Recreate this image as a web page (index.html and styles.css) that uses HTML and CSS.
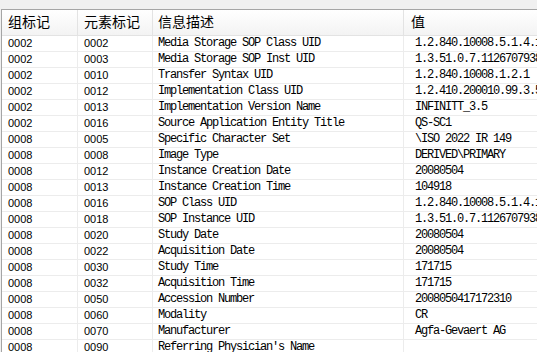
FILE: index.html
```html
<!DOCTYPE html>
<html lang="zh-CN">
<head>
<meta charset="utf-8">
<title>DICOM 标签</title>
<link rel="stylesheet" href="styles.css">
</head>
<body>
<div class="list">
  <div class="head">
    <div class="hcell">组标记</div>
    <div class="hcell">元素标记</div>
    <div class="hcell">信息描述</div>
    <div class="hcell">值</div>
  </div>
  <div class="body">
    <div class="row"><div class="c g">0002</div><div class="c e">0002</div><div class="c d">Media Storage SOP Class UID</div><div class="c v">1.2.840.10008.5.1.4.1.1.1</div></div>
    <div class="row"><div class="c g">0002</div><div class="c e">0003</div><div class="c d">Media Storage SOP Inst UID</div><div class="c v">1.3.51.0.7.1126707938</div></div>
    <div class="row"><div class="c g">0002</div><div class="c e">0010</div><div class="c d">Transfer Syntax UID</div><div class="c v">1.2.840.10008.1.2.1</div></div>
    <div class="row"><div class="c g">0002</div><div class="c e">0012</div><div class="c d">Implementation Class UID</div><div class="c v">1.2.410.200010.99.3.5</div></div>
    <div class="row"><div class="c g">0002</div><div class="c e">0013</div><div class="c d">Implementation Version Name</div><div class="c v">INFINITT_3.5</div></div>
    <div class="row"><div class="c g">0002</div><div class="c e">0016</div><div class="c d">Source Application Entity Title</div><div class="c v">QS-SC1</div></div>
    <div class="row"><div class="c g">0008</div><div class="c e">0005</div><div class="c d">Specific Character Set</div><div class="c v">\ISO 2022 IR 149</div></div>
    <div class="row"><div class="c g">0008</div><div class="c e">0008</div><div class="c d">Image Type</div><div class="c v">DERIVED\PRIMARY</div></div>
    <div class="row"><div class="c g">0008</div><div class="c e">0012</div><div class="c d">Instance Creation Date</div><div class="c v">20080504</div></div>
    <div class="row"><div class="c g">0008</div><div class="c e">0013</div><div class="c d">Instance Creation Time</div><div class="c v">104918</div></div>
    <div class="row"><div class="c g">0008</div><div class="c e">0016</div><div class="c d">SOP Class UID</div><div class="c v">1.2.840.10008.5.1.4.1.1.1</div></div>
    <div class="row"><div class="c g">0008</div><div class="c e">0018</div><div class="c d">SOP Instance UID</div><div class="c v">1.3.51.0.7.1126707938</div></div>
    <div class="row"><div class="c g">0008</div><div class="c e">0020</div><div class="c d">Study Date</div><div class="c v">20080504</div></div>
    <div class="row"><div class="c g">0008</div><div class="c e">0022</div><div class="c d">Acquisition Date</div><div class="c v">20080504</div></div>
    <div class="row"><div class="c g">0008</div><div class="c e">0030</div><div class="c d">Study Time</div><div class="c v">171715</div></div>
    <div class="row"><div class="c g">0008</div><div class="c e">0032</div><div class="c d">Acquisition Time</div><div class="c v">171715</div></div>
    <div class="row"><div class="c g">0008</div><div class="c e">0050</div><div class="c d">Accession Number</div><div class="c v">2008050417172310</div></div>
    <div class="row"><div class="c g">0008</div><div class="c e">0060</div><div class="c d">Modality</div><div class="c v">CR</div></div>
    <div class="row"><div class="c g">0008</div><div class="c e">0070</div><div class="c d">Manufacturer</div><div class="c v">Agfa-Gevaert AG</div></div>
    <div class="row"><div class="c g">0008</div><div class="c e">0090</div><div class="c d">Referring Physician's Name</div><div class="c v"></div></div>
  </div>
</div>
</body>
</html>
```

FILE: styles.css
```css
html, body {
  margin: 0;
  padding: 0;
  width: 537px;
  height: 352px;
  overflow: hidden;
  background: #f0f0f0;
}

.list {
  margin-top: 9px;
  margin-left: 1px;
  border-top: 1px solid #a5a5a5;
  border-left: 1px solid #a5a5a5;
  background: #ffffff;
  height: 400px;
  overflow: hidden;
}

.head,
.row {
  display: grid;
  grid-template-columns: 76px 75px 251px 1fr;
  box-sizing: border-box;
}

.head {
  height: 26px;
  background: linear-gradient(#ffffff, #f3f3f3);
  border-bottom: 1px solid #e3e3e3;
}

.hcell {
  font-family: "Noto Sans CJK SC", sans-serif;
  font-size: 14px;
  line-height: 23px;
  color: #000;
  padding-left: 6px;
  border-right: 1px solid #e3e3e3;
  white-space: nowrap;
}

.hcell:nth-child(3) { padding-left: 5px; }
.hcell:nth-child(4) { padding-left: 7px; border-right: none; }

.row {
  height: 16px;
  border-bottom: 1px solid #ececec;
}

.c {
  height: 15px;
  line-height: 15px;
  color: #000;
  white-space: nowrap;
  overflow: hidden;
  border-right: 1px solid #ececec;
}

.g, .e {
  font-family: "Liberation Sans", sans-serif;
  font-size: 11px;
  padding-left: 6px;
}

.d, .v {
  font-family: "Liberation Mono", monospace;
  font-size: 12px;
  letter-spacing: -1.2px;
}

.d { padding-left: 5px; }
.v { padding-left: 11px; border-right: none; }
```
